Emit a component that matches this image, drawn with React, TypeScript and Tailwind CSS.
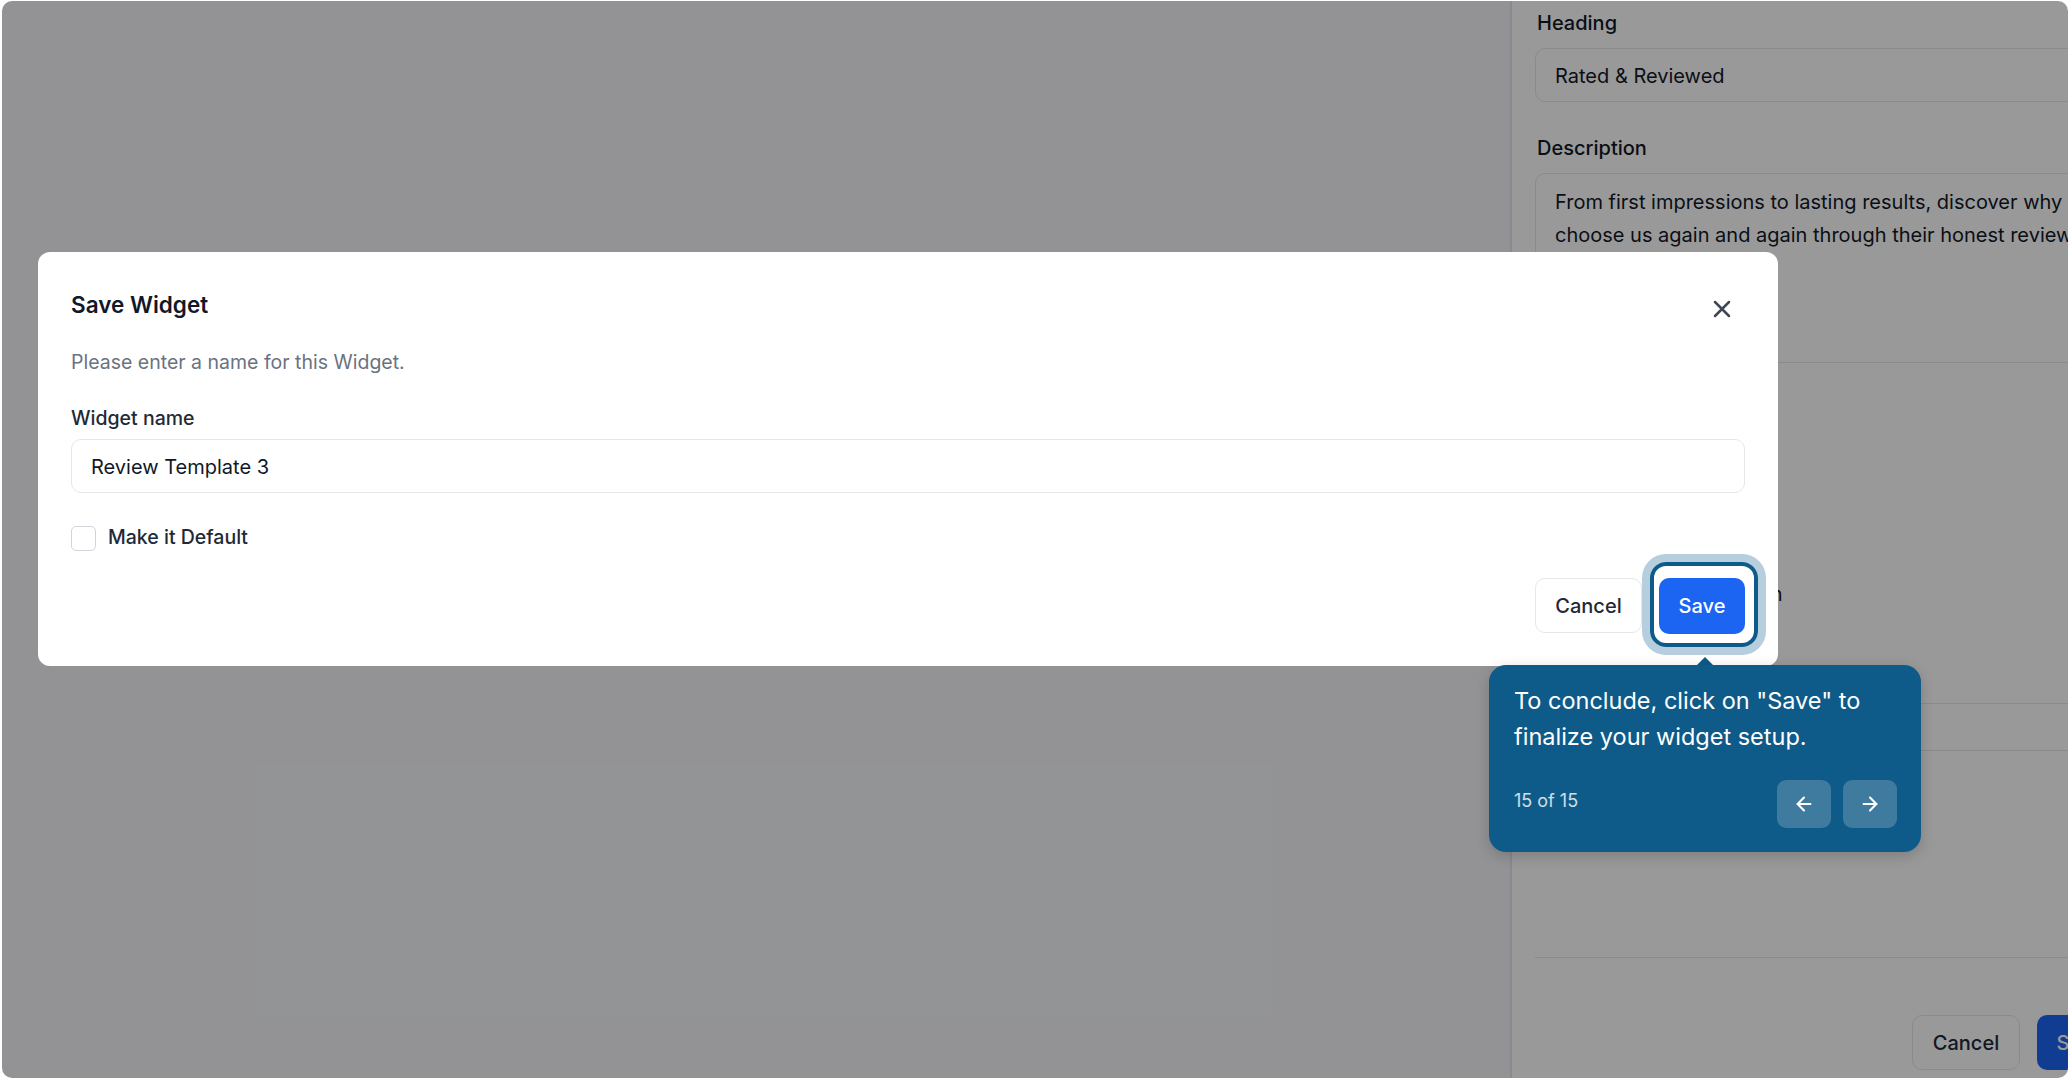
import { ArrowLeft, ArrowRight } from "lucide-react";

export default function App() {
  return (
    <div className="w-[2070px] h-[1080px] bg-white pt-[1px] px-[2px] pb-[2px] font-[Inter,sans-serif]">
      <div className="relative flex h-full w-full overflow-hidden rounded-[10px]">
        {/* Left page area */}
        <div className="w-[1508px] shrink-0 bg-[#f5f6f8]" />

        {/* Right settings panel */}
        <div className="flex w-[637px] shrink-0 flex-col border-l-2 border-[#e5e7eb] bg-white pl-[23px] pr-[24px]">
          <div className="mt-[8px] pl-[2px] text-[20px] font-medium leading-[28px] text-[#111827]">Heading</div>
          <div className="mt-[11px] flex h-[54px] items-center rounded-[10px] border border-[#e5e7eb] px-[19px] pt-[2px] text-[20px] text-[#111827]">
            Rated &amp; Reviewed
          </div>
          <div className="mt-[32px] pl-[2px] text-[20px] font-medium leading-[28px] text-[#111827]">Description</div>
          <div className="mt-[11px] h-[190px] rounded-[10px] border border-[#e5e7eb] px-[19px] pt-[12px] text-[20px] leading-[33px] text-[#111827] whitespace-nowrap">
            From first impressions to lasting results, discover why customers
            <br />
            choose us again and again through their honest reviews.
          </div>
          <div className="mt-[217px] pl-[2px] text-[20px] leading-[28px] text-[#111827] whitespace-nowrap">
            Show review count button
          </div>
          <div className="mt-[95px] h-[48px] rounded-[10px] border border-[#e5e7eb]" />
          <div className="mt-[206px] border-t border-[#e5e7eb]" />
          <div className="mt-[57px] flex justify-end gap-[17px]">
            <button className="flex h-[55px] w-[108px] items-center justify-center rounded-[10px] border border-[#e5e7eb] bg-white text-[20px] font-medium text-[#1f2937]">
              Cancel
            </button>
            <button className="flex h-[55px] w-[86px] items-center justify-center rounded-[10px] bg-[#1c64f2] text-[20px] font-medium text-white">
              Save
            </button>
          </div>
        </div>

        {/* Dim overlay */}
        <div className="absolute inset-0 bg-black/40" />

        {/* Modal */}
        <div className="absolute left-[36px] top-[251px] w-[1740px] rounded-[12px] bg-white px-[33px] pt-[37px] pb-[32px]">
          <div className="flex items-start justify-between">
            <h2 className="text-[22.5px] font-semibold leading-[31px] text-[#111827]">Save Widget</h2>
            <button className="mt-[11px] mr-[14px]">
              <svg width="18" height="18" viewBox="0 0 18 18" fill="none" stroke="#3f4756" strokeWidth="2.5" strokeLinecap="round">
                <path d="M2 2L16 16M16 2L2 16" />
              </svg>
            </button>
          </div>
          <p className="mt-[28px] text-[19.5px] leading-[28px] text-[#6b7280]">Please enter a name for this Widget.</p>
          <div className="mt-[28px] text-[19.5px] font-medium leading-[28px] text-[#1f2937]">Widget name</div>
          <div className="mt-[7px] flex h-[54px] items-center rounded-[10px] border border-[#e5e7eb] px-[19px] pt-[2px] text-[20px] text-[#111827]">
            Review Template 3
          </div>
          <div className="mt-[31px] flex h-[28px] items-center gap-[12px]">
            <div className="h-[25px] w-[25px] rounded-[5px] border border-[#d1d5db] bg-white" />
            <span className="text-[19.5px] font-medium text-[#1f2937]">Make it Default</span>
          </div>
          <div className="mt-[26px] flex justify-end gap-[17px]">
            <button className="flex h-[55px] w-[107px] items-center justify-center rounded-[10px] border border-[#e5e7eb] bg-white text-[20px] font-medium text-[#1f2937]">
              Cancel
            </button>
            <button className="flex h-[56px] w-[86px] items-center justify-center rounded-[10px] bg-[#1c64f2] text-[20px] font-medium text-white">
              Save
            </button>
          </div>
        </div>

        {/* Tour highlight ring */}
        <div className="absolute left-[1648px] top-[561px] h-[85px] w-[108px] rounded-[16px] border-[4px] border-[#0e5a88] shadow-[0_0_0_8px_#b6cedd]" />

        {/* Tooltip arrow */}
        <svg className="absolute left-[1694px] top-[655px]" width="18" height="10" viewBox="0 0 18 10">
          <path d="M0 10L9 1L18 10Z" fill="#0e5a88" />
        </svg>

        {/* Tooltip */}
        <div className="absolute left-[1487px] top-[664px] w-[432px] rounded-[17px] bg-[#0e5a88] pl-[25px] pr-[24px] pt-[18px] pb-[24px] shadow-[0_4px_14px_rgba(0,0,0,0.18)]">
          <p className="text-[23.5px] leading-[36px] text-white whitespace-nowrap">
            To conclude, click on "Save" to
            <br />
            finalize your widget setup.
          </p>
          <div className="mt-[25px] flex items-center justify-between">
            <span className="mb-[7px] text-[18px] text-white/80">15 of 15</span>
            <div className="flex gap-[12px]">
              <button className="flex h-[48px] w-[54px] items-center justify-center rounded-[9px] bg-white/20">
                <ArrowLeft size={22} strokeWidth={2.25} color="white" />
              </button>
              <button className="flex h-[48px] w-[54px] items-center justify-center rounded-[9px] bg-white/20">
                <ArrowRight size={22} strokeWidth={2.25} color="white" />
              </button>
            </div>
          </div>
        </div>
      </div>
    </div>
  );
}
